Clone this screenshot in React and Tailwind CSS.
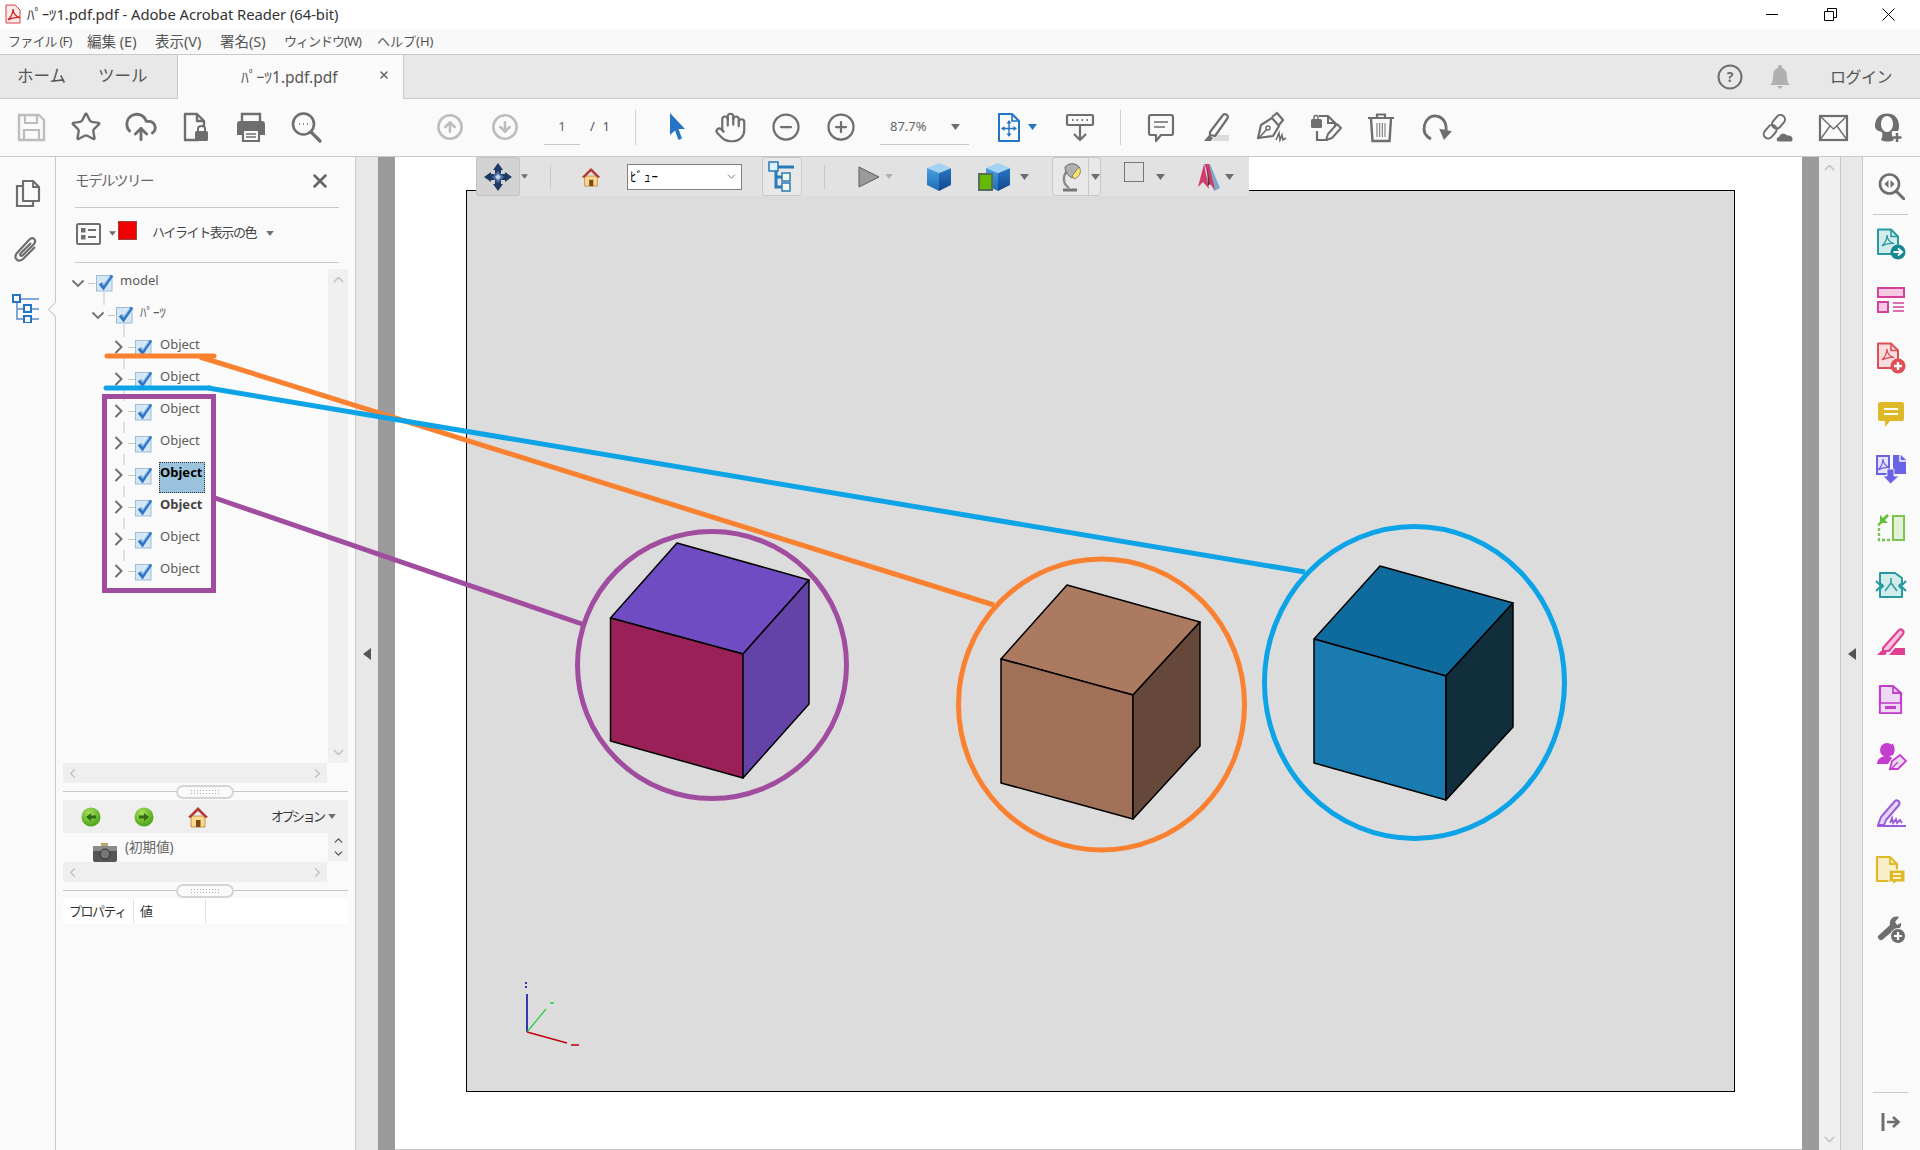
import React from "react";
import { CloudUpload, CircleArrowUp, CircleArrowDown, CircleMinus, CirclePlus, Hand, Star, ChevronUp, ChevronDown, ChevronLeft, ChevronRight, X } from "lucide-react";

const GRAY = "#6e6e6e";
const KANA = "ﾊﾟｰﾂ";

const Svg = ({ w = 32, h = 32, vb, children, className = "" }) => (
  <svg width={w} height={h} viewBox={vb || `0 0 ${w} ${h}`} fill="none" className={className}>
    {children}
  </svg>
);

const Swoosh = ({ x = 0, y = 0, c, s = 1.3 }) => (
  <path
    transform={`translate(${x} ${y})`}
    d="M1 12 C4 9 6 4 6 1 C6 5 9 9 13 9.5 C9 9 4 10 1 12Z"
    stroke={c}
    strokeWidth={s}
    fill="none"
  />
);

const Caret = ({ c = "#6e6e6e", w = 9, h = 6 }) => (
  <svg width={w} height={h} viewBox="0 0 9 6" className="shrink-0">
    <path d="M0 0H9L4.5 6Z" fill={c} />
  </svg>
);

/* top toolbar icons */
const SaveIcon = () => (
  <Svg>
    <path d="M4 4H24L29 9V29H4Z" stroke="#bdbdbd" strokeWidth="2.4" strokeLinejoin="round" />
    <path d="M10 4V12H22V4M9 29V19H24V29" stroke="#bdbdbd" strokeWidth="2.2" />
  </Svg>
);
const FileLockIcon = () => (
  <Svg>
    <path d="M18 29H5V3H17L24 10V15M17 3V10H24" stroke={GRAY} strokeWidth="2.4" strokeLinejoin="round" />
    <rect x="15" y="20" width="13" height="10" rx="1.5" fill={GRAY} />
    <path d="M18 20V17.5C18 14 25 14 25 17.5V20" stroke={GRAY} strokeWidth="2" />
  </Svg>
);
const PrintIcon = () => (
  <Svg>
    <path d="M7 11V3H25V11" stroke={GRAY} strokeWidth="2.4" />
    <path d="M5 10H27C29 10 30 11 30 13V24H25V18H7V24H2V13C2 11 3 10 5 10Z" fill={GRAY} />
    <path d="M8 19H24V30H8Z" stroke={GRAY} strokeWidth="2.2" fill="#fafafa" />
    <path d="M11 23H21M11 26H21" stroke={GRAY} strokeWidth="1.4" />
  </Svg>
);
const SearchDotsIcon = () => (
  <Svg>
    <circle cx="13.5" cy="13" r="10.5" stroke={GRAY} strokeWidth="2.6" />
    <path d="M21 21L30 30" stroke={GRAY} strokeWidth="3.2" strokeLinecap="round" />
    <path d="M9 13H9.8M13 13H13.8M17 13H17.8" stroke={GRAY} strokeWidth="2.2" />
  </Svg>
);
const CursorIcon = () => (
  <Svg>
    <path d="M10 2V24L15 19.5L18.5 29L22 27.5L18.5 18H25Z" fill="#2274c4" />
  </Svg>
);
const FitPageIcon = () => (
  <Svg>
    <path d="M6 3H19L26 10V30H6Z" stroke="#2274c4" strokeWidth="2" strokeLinejoin="round" fill="#fafafa" />
    <path d="M19 3V10H26" stroke="#2274c4" strokeWidth="1.6" />
    <path d="M16 11V24M10 17.5H22" stroke="#2274c4" strokeWidth="1.4" />
    <path d="M16 9L13.5 12.5H18.5ZM16 26L13.5 22.5H18.5ZM8 17.5L11.5 15V20ZM24 17.5L20.5 15V20Z" fill="#2274c4" />
  </Svg>
);
const KeyboardDownIcon = () => (
  <Svg>
    <rect x="3" y="4" width="26" height="10" rx="1" stroke={GRAY} strokeWidth="2.2" />
    <path d="M8 9H9.5M12.5 9H14M17.5 9H19M22.5 9H24" stroke={GRAY} strokeWidth="2" />
    <path d="M16 14V29M10 23L16 29L22 23" stroke={GRAY} strokeWidth="2.2" />
  </Svg>
);
const CommentIcon = () => (
  <Svg>
    <path d="M6 4H26C27.5 4 28 5 28 6V22C28 23 27.5 24 26 24H16L11 30V24H6C4.5 24 4 23 4 22V6C4 5 4.5 4 6 4Z" stroke={GRAY} strokeWidth="2.2" strokeLinejoin="round" />
    <path d="M9 11H23M9 16H20" stroke={GRAY} strokeWidth="1.6" />
  </Svg>
);
const HighlightIcon = () => (
  <Svg>
    <rect x="13" y="24" width="16" height="6" fill="#dcdcdc" />
    <path d="M10 21L23 4C25 2 28 4 28 6L27 8L15 25L10 24Z" stroke={GRAY} strokeWidth="2.2" strokeLinejoin="round" />
    <path d="M4 30L9 24L13 27L11 30Z" fill={GRAY} />
  </Svg>
);
const PenSignIcon = () => (
  <Svg>
    <path d="M3 27L6 14L17 7L24 15L18 25Z" stroke={GRAY} strokeWidth="2.2" strokeLinejoin="round" />
    <path d="M17 6L22 2L28 9L24 14" stroke={GRAY} strokeWidth="2.2" />
    <path d="M3 28L12 18" stroke={GRAY} strokeWidth="1.6" />
    <circle cx="13" cy="17" r="2" stroke={GRAY} strokeWidth="1.5" />
    <path d="M21 29L24 22L25 29L27 24L28 29L31 27" stroke={GRAY} strokeWidth="1.6" />
  </Svg>
);
const EditDocIcon = () => (
  <Svg>
    <path d="M9 5H18L25 12V15M7 20V29H18" stroke={GRAY} strokeWidth="2.2" />
    <path d="M18 5V12H25" stroke={GRAY} strokeWidth="2" />
    <rect x="1" y="8" width="11" height="9" rx="1.5" fill={GRAY} />
    <path d="M4 8V6C4 4 8 4 8 6V8" stroke={GRAY} strokeWidth="1.5" />
    <path d="M16 29L18 23L27 13L31 17L22 27Z" stroke={GRAY} strokeWidth="2" strokeLinejoin="round" />
  </Svg>
);
const TrashIcon = () => (
  <Svg>
    <path d="M3 7H29M12 7V3.5H20V7" stroke={GRAY} strokeWidth="2.2" />
    <path d="M6 8L7.5 30H24.5L26 8" stroke={GRAY} strokeWidth="2.4" />
    <path d="M12 12V26M14.7 12V26M17.3 12V26M20 12V26" stroke={GRAY} strokeWidth="1" />
  </Svg>
);
const RotateIcon = () => (
  <Svg>
    <path d="M11 28C5 25 3 20 4.5 14C6 8 11 4 16.5 5C23 6 27 12 26 20" stroke={GRAY} strokeWidth="2.8" />
    <path d="M18 19H31L25 29Z" fill={GRAY} transform="rotate(12 25 24)" />
  </Svg>
);
const LinkCloudIcon = () => (
  <Svg>
    <g transform="rotate(-50 13 15)" stroke={GRAY} strokeWidth="2">
      <rect x="-2" y="10.5" width="15" height="9" rx="4.5" />
      <rect x="11" y="10.5" width="15" height="9" rx="4.5" />
    </g>
    <path d="M17 31C13.5 31 13.5 26 17 25.5C17.5 22 23 21 25 24C29 23.5 31 26 31 28C31 30 30 31 29 31Z" fill={GRAY} stroke="#fafafa" />
  </Svg>
);
const MailIcon = () => (
  <Svg>
    <rect x="3" y="5" width="27" height="24" stroke={GRAY} strokeWidth="2.2" fill="none" />
    <path d="M3 5L16.5 18L30 5M3 29L13 15M30 29L20 15" stroke={GRAY} strokeWidth="1.4" />
  </Svg>
);
const PersonPlusIcon = () => (
  <Svg>
    <path d="M3 15C3 7 8 2.5 15 2.5C22 2.5 27 7 27 15C27 17 26.5 19 26 20H20C19 24 21 27 22 29C18 31 13 31 9 29C10 27 11 24 10 21C5 20 3 18 3 15Z" fill={GRAY} />
    <ellipse cx="15" cy="13" rx="6" ry="8" fill="#fafafa" />
    <path d="M25 22V31M20.5 26.5H29.5" stroke={GRAY} strokeWidth="2.4" />
  </Svg>
);

/* right rail icons */
const DocPlus = ({ line, fill, circle, plus }) => (
  <Svg>
    <path d="M3 1.5H16L23 8.5V26H3Z" fill={fill} stroke={line} strokeWidth="2" strokeLinejoin="round" />
    <path d="M16 1.5V8.5H23" stroke={line} strokeWidth="1.6" />
    <Swoosh x={6} y={6} c={line} />
    <circle cx="23" cy="24" r="7.5" fill={circle} />
    {plus ? (
      <path d="M19 24H27M23 20V28" stroke="#fff" strokeWidth="2.4" />
    ) : (
      <path d="M18.5 24H26M23 20.5L27 24L23 27.5" stroke="#fff" strokeWidth="2" />
    )}
  </Svg>
);
const RailIcons = [
  <DocPlus line="#279aa0" fill="#d2ecec" circle="#15898f" />,
  <Svg>
    <rect x="3" y="3" width="26" height="9" fill="#f7c9e2" stroke="#d4409a" strokeWidth="2" />
    <rect x="3" y="17" width="10" height="10" fill="#f7c9e2" stroke="#d4409a" strokeWidth="2" />
    <path d="M18 18H29M18 22H29M18 26H29" stroke="#d4409a" strokeWidth="1.5" />
  </Svg>,
  <DocPlus line="#de4e54" fill="#f9dcdd" circle="#de4e54" plus />,
  <Svg>
    <path d="M5 3H27C28 3 29 4 29 5V20C29 21 28 22 27 22H15L10 28V22H5C4 22 3 21 3 20V5C3 4 4 3 5 3Z" fill="#e0b929" />
    <path d="M9 10H23M9 15H23" stroke="#fff" strokeWidth="2" />
  </Svg>,
  <Svg className="-mt-[4px]">
    <path d="M2 2H14V20H2Z" fill="#e4e3fb" stroke="#6a63e6" strokeWidth="2" />
    <path d="M18 1H26L31 6V20H18Z" fill="#6a63e6" />
    <path d="M25 1V7H31" stroke="#fafafa" strokeWidth="1.4" />
    <Swoosh x={2} y={4} c="#6a63e6" />
    <path d="M12 15H19V22H24L15.5 30L8 22H12Z" fill="#6a63e6" stroke="#fafafa" strokeWidth="0.8" />
  </Svg>,
  <Svg>
    <rect x="18" y="3" width="11" height="24" fill="#e2f1d8" stroke="#7cc450" strokeWidth="2" />
    <path d="M4 10V27H15M4 10H8" stroke="#7cc450" strokeWidth="2.4" strokeDasharray="3 2" />
    <path d="M5 2V10H13L10 7L14 3L12 1L8 5Z" fill="#63bd3b" />
  </Svg>,
  <Svg>
    <path d="M8 3H20L27 8V13L24 16L27 19V27H5V19L8 16L5 13V3Z" fill="#d2ecec" stroke="#279aa0" strokeWidth="2" strokeLinejoin="round" />
    <path d="M1 11L6 16L1 21M31 11L26 16L31 21" stroke="#279aa0" strokeWidth="2" />
    <path d="M16 8V13L10 21M16 13L22 21" stroke="#279aa0" strokeWidth="1.5" />
  </Svg>,
  <Svg>
    <path d="M8 21L24 3C26 1 30 4 28 7L14 24H8Z" fill="#f7c3dd" stroke="#e03f93" strokeWidth="2" strokeLinejoin="round" />
    <path d="M2 28L8 22L12 26L10 28ZM14 28L20 21H30V28Z" fill="#e03f93" />
  </Svg>,
  <Svg>
    <path d="M5 2H18L26 9V29H5Z" fill="#f0d9f5" stroke="#c23fce" strokeWidth="2.2" strokeLinejoin="round" />
    <path d="M18 2V9H26" stroke="#c23fce" strokeWidth="1.8" />
    <rect x="5" y="19" width="21" height="10" fill="#f0d9f5" stroke="#c23fce" strokeWidth="1.6" />
    <rect x="10" y="22" width="11" height="3" fill="#c23fce" />
  </Svg>,
  <Svg>
    <circle cx="12" cy="9" r="7" fill="#c23fce" />
    <path d="M2 23C2 18 6 15 12 15C14 15 16 16 17 17L13 23Z" fill="#c23fce" />
    <path d="M17 3C20 6 19 12 17 14" stroke="#c23fce" strokeWidth="1.6" />
    <path d="M15 28L17 20L25 14L31 20L23 28Z" fill="#f0d9f5" stroke="#c23fce" strokeWidth="1.8" />
    <path d="M15 29L23 21" stroke="#c23fce" strokeWidth="1.3" />
  </Svg>,
  <Svg>
    <path d="M3 27L6 19L20 3C22 1 26 4 24 7L11 22L9 27Z" fill="#e4d6f7" stroke="#9b5ddb" strokeWidth="2" strokeLinejoin="round" />
    <path d="M2 28H31M15 25L17 20L18 25L21 21L22 25L25 22L27 25" stroke="#9b5ddb" strokeWidth="1.8" />
  </Svg>,
  <Svg>
    <path d="M2 2H15L22 9V26H2Z" fill="#f7efc8" stroke="#e0b929" strokeWidth="2.2" strokeLinejoin="round" />
    <path d="M15 2V9H22" stroke="#e0b929" strokeWidth="1.8" />
    <path d="M15 15H29C30 15 30 16 30 16V26C30 27 29 27 29 27H21L18 30V27H15C14 27 14 26 14 26V16C14 16 14 15 15 15Z" fill="#e0b929" stroke="#fafafa" />
    <path d="M18 19H26M18 23H26" stroke="#fff" strokeWidth="1.6" />
  </Svg>,
  <Svg>
    <path d="M3 24L15 13C14 8 18 3 24 5L20 10L22 13L26 11C27 15 23 19 19 18L7 28C5 29 2 26 3 24Z" fill={GRAY} />
    <circle cx="23" cy="24" r="7.5" fill={GRAY} stroke="#fafafa" />
    <path d="M19 24H27M23 20V28" stroke="#fff" strokeWidth="2.2" />
  </Svg>,
];

/* tree */
const TreeRow = ({ depth = 0, label, bold, selected, parent, sibling }) => (
  <div className="flex items-start h-[32px]" style={{ paddingLeft: depth }}>
    <svg width="50" height="32" viewBox="0 0 50 32" fill="none" className="shrink-0 overflow-visible">
      {parent ? (
        <path d="M9.5 16.5L15 22L20.5 16.5" stroke="#707070" strokeWidth="1.9" />
      ) : (
        <path d="M12.5 13L18.5 19L12.5 25" stroke="#707070" strokeWidth="2" />
      )}
      <path d="M25 19.5H32" stroke="#c4c4c4" />
      {parent && <path d="M41 28V41" stroke="#c4c4c4" />}
      {sibling && <path d="M21 30V41" stroke="#c4c4c4" />}
      <g transform={parent ? "translate(1 0)" : "translate(0 1)"}>
        <rect x="32.5" y="11.5" width="15.5" height="15.5" fill="#d5e6f5" stroke="#9dbcd8" />
        <path d="M36 19.5L39.5 24L48 11.5" stroke="#3377c2" strokeWidth="3" />
        <path d="M37.5 18L40 20.5L46 12.5" stroke="#8cbcea" strokeWidth="1.2" />
      </g>
    </svg>
    {selected ? (
      <span className="ml-[6px] mt-[6px] block w-[46px] h-[31px] bg-[#9cc3de] border border-dotted border-[#333] text-[13px] font-bold leading-[19px] text-black">
        {label}
      </span>
    ) : (
      <span className={`ml-[7px] text-[13px] leading-[32px] ${bold ? "font-bold text-[#444]" : "text-[#5a5a5a]"}`}>{label}</span>
    )}
  </div>
);

const HScroll = () => (
  <div className="ml-[7px] w-[264px] h-[20px] bg-[#efefef] flex items-center justify-between px-[2px] shrink-0">
    <ChevronLeft size={15} color="#c0c0c0" strokeWidth={2} />
    <ChevronRight size={15} color="#c0c0c0" strokeWidth={2} />
  </div>
);

const Splitter = () => (
  <div className="relative ml-[7px] w-[285px] h-[17px] flex items-center shrink-0">
    <div className="absolute inset-x-0 top-[8px] h-px bg-[#c8c8c8]" />
    <div className="relative ml-[113px] w-[58px] h-[14px] rounded-full border-2 border-[#d5d5d5] bg-[#fafafa] flex items-center justify-center">
      <div className="w-[30px] h-[5px] bg-[radial-gradient(#aaa_1px,transparent_1px)] bg-[length:3px_3px]" />
    </div>
  </div>
);

const GreenBall = ({ left }) => (
  <svg width="20" height="20" viewBox="0 0 20 20">
    <defs>
      <radialGradient id={left ? "gl" : "gr"} cx="0.4" cy="0.3" r="0.8">
        <stop offset="0" stopColor="#a8e05a" />
        <stop offset="1" stopColor="#3e9a10" />
      </radialGradient>
    </defs>
    <circle cx="10" cy="10" r="9.5" fill={`url(#${left ? "gl" : "gr"})`} />
    <path d={left ? "M5 10L10 6V8.5H15V11.5H10V14Z" : "M15 10L10 6V8.5H5V11.5H10V14Z"} fill="#2f6b10" />
  </svg>
);

const House = ({ s = 22 }) => (
  <svg width={s} height={s} viewBox="0 0 22 22">
    <path d="M4 10V21H18V10Z" fill="#fbd98c" stroke="#b9803a" strokeWidth="0.8" />
    <path d="M1 11L11 1L21 11L18.5 12L11 5L3.5 12Z" fill="#b13a36" />
    <rect x="9" y="14" width="4.5" height="7" fill="#7a4a1e" />
  </svg>
);

const Cube = () => (
  <svg width="28" height="30" viewBox="0 0 28 30">
    <defs>
      <linearGradient id="cubeFront" x1="0" y1="0" x2="0" y2="1">
        <stop offset="0" stopColor="#4aa0e0" />
        <stop offset="1" stopColor="#1d6cb8" />
      </linearGradient>
      <linearGradient id="cubeSide" x1="0" y1="0" x2="0" y2="1">
        <stop offset="0" stopColor="#2a78c4" />
        <stop offset="1" stopColor="#10468c" />
      </linearGradient>
    </defs>
    <path d="M14 11L26 6V23L14 29Z" fill="url(#cubeSide)" />
    <path d="M14 1L26 6L14 11L2 6Z" fill="#a4d2f2" />
    <path d="M14 11V29L2 23V6Z" fill="url(#cubeFront)" />
  </svg>
);

const Toolbar3D = () => (
  <div className="absolute left-[81px] top-0 w-[773px] h-[39px] bg-[#e2e2e2] flex items-center">
    <div className="w-[44px] h-[39px] bg-[#d3d3d3] border border-[#c4c4c4] rounded-[2px] flex items-center justify-center shrink-0">
      <svg width="32" height="32" viewBox="0 0 32 32">
        <path d="M16 2L21 9H19V13H23V11L30 16L23 21V19H19V23H21L16 30L11 23H13V19H9V21L2 16L9 11V13H13V9H11Z" fill="#1f3a63" />
        <path d="M16 10L22 16L16 22L10 16Z" fill="#4a6c9f" />
        <path d="M16 13L19 16L16 19L13 16Z" fill="#c2d2e8" />
      </svg>
    </div>
    <div className="ml-[1px] w-[5px]"><Caret w={7} h={5} /></div>
    <div className="ml-[24px] w-px h-[24px] bg-[#c8c8c8]" />
    <div className="ml-[30px] w-[20px] flex justify-center"><House /></div>
    <div className="ml-[26px] w-[115px] h-[26px] bg-white border border-[#808080] flex items-center justify-between px-[2px] shrink-0">
      <span className="text-[13px] text-black leading-none tracking-[1px]">ﾋﾞｭｰ</span>
      <ChevronDown size={13} color="#555" strokeWidth={1.5} className="mr-[1px]" />
    </div>
    <div className="ml-[20px] w-[40px] h-[39px] bg-[#e8e8e8] border border-[#c9c9c9] rounded-[3px] flex items-center justify-center shrink-0">
      <svg width="28" height="32" viewBox="0 0 28 32" fill="none">
        <path d="M4 6H26M8 8V26H16M8 16H16" stroke="#2a7ab8" strokeWidth="3" />
        <rect x="1" y="1" width="9" height="9" fill="#dff0fb" stroke="#2a7ab8" strokeWidth="1.5" />
        <rect x="14" y="12" width="8" height="8" fill="#f4f8e8" stroke="#2a7ab8" strokeWidth="1.5" />
        <rect x="14" y="22" width="8" height="8" fill="#f4f8e8" stroke="#2a7ab8" strokeWidth="1.5" />
      </svg>
    </div>
    <div className="ml-[22px] w-px h-[24px] bg-[#c8c8c8]" />
    <div className="ml-[33px] w-[22px] flex justify-center">
      <svg width="22" height="22" viewBox="0 0 22 22"><path d="M1 1L21 11L1 21Z" fill="#9a9a9a" stroke="#5c5c5c" strokeWidth="1" /></svg>
    </div>
    <div className="ml-[5px] w-[10px]"><Caret c="#b0b0b0" w={8} h={5} /></div>
    <div className="ml-[30px] w-[28px]"><Cube /></div>
    <div className="ml-[31px] w-[28px] relative">
      <Cube />
      <div className="absolute -left-[6px] bottom-[1px] w-[15px] h-[18px] bg-[#67b800] border-2 border-[#55705a]" />
    </div>
    <div className="ml-[8px] w-[10px]"><Caret /></div>
    <div className="ml-[22px] w-[49px] h-[39px] bg-[#e8e8e8] border border-[#c9c9c9] rounded-[3px] flex items-center shrink-0">
      <div className="w-[37px] flex justify-center">
        <svg width="26" height="32" viewBox="0 0 26 32" fill="none">
          <path d="M5 29H19" stroke="#777" strokeWidth="3" />
          <path d="M11 27C4 22 5 15 9 10L14 4" stroke="#8a8a8a" strokeWidth="2.4" />
          <path d="M7 6C12 1 18 2 22 7L14 17C9 14 7 10 7 6Z" fill="#b0b0b0" stroke="#666" />
          <path d="M21 6C24 10 22 16 16 18L14 15L20 7Z" fill="#f5e06a" stroke="#666" strokeWidth="0.7" />
        </svg>
      </div>
      <div className="h-full border-l border-[#c9c9c9] pl-[2px] flex items-center"><Caret /></div>
    </div>
    <div className="ml-[23px] w-[20px] h-[20px] -mt-[9px] border border-[#777] bg-[#e2e2e2]" />
    <div className="ml-[12px] w-[10px]"><Caret /></div>
    <div className="ml-[30px] w-[26px]">
      <svg width="26" height="30" viewBox="0 0 26 30">
        <path d="M2 25L8 2L13 27L7 20Z" fill="#d13a6a" />
        <path d="M8 2H14L24 26L18 29Z" fill="#7ea8c8" />
        <path d="M9 2H13L19 28L14 22Z" fill="#d13a6a" />
        <path d="M11 5L14 22L12 24Z" fill="#5c2a3c" />
      </svg>
    </div>
    <div className="ml-[3px] w-[10px]"><Caret /></div>
  </div>
);

/* everything drawn on top of the page: the 3D cubes and the hand-drawn annotations */
const Box = ({ p, top, front, right, sw = 1.5 }) => {
  const [tb, rt, ft, lt, lb, fb, rb] = p;
  const pts = (...a) => a.map((q) => q.join(",")).join(" ");
  return (
    <g stroke="#000" strokeWidth={sw} strokeLinejoin="round">
      <polygon points={pts(tb, rt, ft, lt)} fill={top} />
      <polygon points={pts(lt, ft, fb, lb)} fill={front} />
      <polygon points={pts(ft, rt, rb, fb)} fill={right} />
    </g>
  );
};

const Overlay = () => (
  <svg width="1920" height="1150" viewBox="0 0 1920 1150" fill="none" className="absolute left-0 top-0 pointer-events-none">
    <Box
      p={[[677, 543], [809, 580], [743, 654], [610.5, 618], [610.5, 741], [743, 778], [809, 704]]}
      top="#704cc2"
      front="#9a2058"
      right="#6443a8"
    />
    <Box
      p={[[1067, 585], [1200, 622], [1133, 695], [1001, 659], [1001, 783], [1133, 819], [1200, 746]]}
      top="#ac7a60"
      front="#a07058"
      right="#65483a"
    />
    <Box
      p={[[1380, 566], [1513, 603], [1446, 676], [1314, 639], [1314, 763], [1446, 800], [1513, 727]]}
      top="#0f6b9e"
      front="#1a7bb0"
      right="#112e3c"
    />

    {/* axes */}
    <path d="M527 1032V994" stroke="#00009c" strokeWidth="1.5" />
    <path d="M526 982V990" stroke="#00009c" strokeWidth="1.5" strokeDasharray="2 2" />
    <path d="M527 1032L546 1009" stroke="#22d040" strokeWidth="1.2" />
    <path d="M550 1003H554" stroke="#22d040" strokeWidth="1.5" />
    <path d="M527 1032L567 1043" stroke="#c00010" strokeWidth="1.3" />
    <path d="M571 1045H579" stroke="#c00010" strokeWidth="1.5" />

    {/* annotations */}
    <ellipse cx="712" cy="665" rx="134.5" ry="133.5" stroke="#a04da0" strokeWidth="5" />
    <ellipse cx="1101.5" cy="704.5" rx="143" ry="145.5" stroke="#f98130" strokeWidth="5" />
    <ellipse cx="1414.5" cy="682.5" rx="150" ry="156" stroke="#0ca3e7" strokeWidth="5" />
    <path d="M107 356H214" stroke="#f98130" strokeWidth="5" strokeLinecap="round" />
    <path d="M200 357L994 605" stroke="#f98130" strokeWidth="5" />
    <path d="M106 388H210" stroke="#0ca3e7" strokeWidth="5" strokeLinecap="round" />
    <path d="M208 388L1305 572" stroke="#0ca3e7" strokeWidth="5" />
    <rect x="104.5" y="396.5" width="109" height="194" stroke="#a04da0" strokeWidth="5" />
    <path d="M215 498L582 624" stroke="#a04da0" strokeWidth="5" />
  </svg>
);

const Btn = ({ children, w = "w-[55px]" }) => <div className={`${w} flex items-center justify-center shrink-0`}>{children}</div>;

export default function App() {
  return (
    <div className="relative w-[1920px] h-[1150px] overflow-hidden bg-white flex flex-col font-['Noto_Sans','Noto_Sans_CJK_JP',sans-serif] text-[#555]">
      {/* title bar */}
      <div className="h-[29px] flex items-center shrink-0 bg-white">
        <svg width="16" height="20" viewBox="0 0 16 20" className="ml-[5px] -mt-[2px]">
          <path d="M1 1H10L15 6V19H1Z" fill="#fdeaea" stroke="#d24040" />
          <Swoosh x={2} y={4} c="#d02020" />
        </svg>
        <span className="ml-[6px] text-[14.8px] text-[#333] tracking-[-0.05px]">
          {KANA}1.pdf.pdf - Adobe Acrobat Reader (64-bit)
        </span>
        <div className="ml-auto flex items-center pr-[3px]">
          <div className="w-[58px] flex justify-center"><div className="w-[12px] h-px bg-black" /></div>
          <div className="w-[58px] flex justify-center">
            <svg width="13" height="13" viewBox="0 0 13 13" fill="none">
              <path d="M0.5 3.5H9.5V12.5H0.5ZM3.5 3.5V0.5H12.5V9.5H9.5" stroke="#000" />
            </svg>
          </div>
          <div className="w-[58px] flex justify-center">
            <svg width="13" height="13" viewBox="0 0 13 13" fill="none"><path d="M0.5 0.5L12.5 12.5M12.5 0.5L0.5 12.5" stroke="#000" /></svg>
          </div>
        </div>
      </div>

      {/* menu */}
      <div className="h-[26px] bg-[#f9f9f9] border-b border-[#c8c8c8] flex items-center text-[13px] text-[#555] pl-[8px] shrink-0 whitespace-nowrap">
        <span className="w-[79px] tracking-[-0.8px]">ファイル (F)</span>
        <span className="w-[68px] text-[14.5px]">編集 (E)</span>
        <span className="w-[65px] text-[14.5px]">表示(V)</span>
        <span className="w-[64px] text-[14.5px]">署名(S)</span>
        <span className="w-[93px] tracking-[-1px]">ウィンドウ(W)</span>
        <span>ヘルプ(H)</span>
      </div>

      {/* tabs */}
      <div className="h-[44px] bg-[#e8e8e8] border-b border-[#c8c8c8] flex shrink-0">
        <div className="w-[178px] border-r border-[#c8c8c8] flex items-center pl-[17px] text-[16.5px] text-[#555]">
          <span className="w-[81px]">ホーム</span>
          <span>ツール</span>
        </div>
        <div className="relative w-[226px] h-[44px] bg-[#fafafa] border-r border-[#c8c8c8] flex items-center pl-[63px] text-[15.5px] text-[#555]">
          <span className="mt-[1px]">{KANA}1.pdf.pdf</span>
          <X size={12} strokeWidth={3} color="#666" className="absolute right-[13px] top-[14px]" />
        </div>
        <div className="ml-auto flex items-center">
          <svg width="26" height="26" viewBox="0 0 26 26" fill="none" className="mr-[26px]">
            <circle cx="13" cy="13" r="11.5" stroke={GRAY} strokeWidth="2" />
            <text x="13" y="18" textAnchor="middle" fontSize="14" fontWeight="700" fill={GRAY}>?</text>
          </svg>
          <svg width="22" height="26" viewBox="0 0 22 26" className="mr-[39px]">
            <path d="M11 1C13 1 13 3 13 4C17 5 18 9 18 13C18 17 19 19 21 21H1C3 19 4 17 4 13C4 9 5 5 9 4C9 3 9 1 11 1Z" fill="#b0b0b0" />
            <path d="M8 22H14L11 25Z" fill="#b0b0b0" />
          </svg>
          <span className="w-[90px] text-[16px] text-[#555] tracking-[-0.5px]">ログイン</span>
        </div>
      </div>

      {/* main toolbar */}
      <div className="h-[58px] bg-[#fafafa] border-b border-[#c8c8c8] flex items-center pl-[3px] pr-[5px] pb-[1px] shrink-0">
        <Btn><SaveIcon /></Btn>
        <Btn><Star size={32} color={GRAY} strokeWidth={1.8} /></Btn>
        <Btn><CloudUpload size={34} color={GRAY} strokeWidth={2} /></Btn>
        <Btn><FileLockIcon /></Btn>
        <Btn><PrintIcon /></Btn>
        <Btn><SearchDotsIcon /></Btn>

        <div className="ml-[89px] flex">
          <Btn><CircleArrowUp size={28} color="#bdbdbd" strokeWidth={2.2} /></Btn>
          <Btn><CircleArrowDown size={28} color="#bdbdbd" strokeWidth={2.2} /></Btn>
        </div>
        <div className="ml-[12px] w-[36px] h-[34px] mt-[1px] border-b border-[#c8c8c8] text-center text-[13px] leading-[30px] text-[#666]">1</div>
        <div className="ml-[10px] w-[20px] text-[13px] flex justify-between"><span>/</span><span>1</span></div>
        <div className="ml-[25px] w-px h-[35px] bg-[#d0d0d0]" />

        <div className="ml-[12px] flex">
          <Btn><CursorIcon /></Btn>
          <Btn><Hand size={33} color={GRAY} strokeWidth={1.6} /></Btn>
          <Btn><CircleMinus size={30} color={GRAY} strokeWidth={1.8} /></Btn>
          <Btn><CirclePlus size={30} color={GRAY} strokeWidth={1.8} /></Btn>
        </div>
        <div className="ml-[12px] w-[89px] h-[34px] mt-[1px] border-b border-[#c8c8c8] flex items-center pl-[10px] text-[13px] text-[#666]">
          87.7%
          <span className="ml-[24px]"><Caret /></span>
        </div>
        <div className="ml-[24px] w-[59px] flex items-center">
          <FitPageIcon />
          <span className="ml-[3px]"><Caret c="#2274c4" /></span>
        </div>
        <Btn><KeyboardDownIcon /></Btn>
        <div className="ml-[13px] w-px h-[35px] bg-[#d0d0d0]" />
        <div className="ml-[12px] flex">
          <Btn><CommentIcon /></Btn>
          <Btn><HighlightIcon /></Btn>
          <Btn><PenSignIcon /></Btn>
          <Btn><EditDocIcon /></Btn>
          <Btn><TrashIcon /></Btn>
          <Btn><RotateIcon /></Btn>
        </div>
        <div className="ml-auto flex">
          <Btn><LinkCloudIcon /></Btn>
          <Btn><MailIcon /></Btn>
          <Btn><PersonPlusIcon /></Btn>
        </div>
      </div>

      {/* body */}
      <div className="flex-1 flex min-h-0">
        {/* left rail */}
        <div className="relative w-[56px] bg-[#fafafa] border-r border-[#c8c8c8] flex flex-col items-center pt-[22px] shrink-0">
          <svg width="28" height="28" viewBox="0 0 28 28" fill="none">
            <path d="M9 2H19L25 8V22H9Z" stroke={GRAY} strokeWidth="2.2" strokeLinejoin="round" />
            <path d="M19 2V8H25" stroke={GRAY} strokeWidth="1.8" />
            <path d="M9 7H3V27H19V22" stroke={GRAY} strokeWidth="2.2" />
          </svg>
          <svg width="28" height="30" viewBox="0 0 28 30" fill="none" className="mt-[27px] -ml-[3px]">
            <path d="M23 13L11 25C6 29 1 24 5 19L17 6C21 2 25 6 22 10L11 21C9 23 7 21 9 19L19 9" stroke={GRAY} strokeWidth="2.2" />
          </svg>
          <svg width="30" height="30" viewBox="0 0 30 30" fill="none" className="mt-[29px] -ml-[3px]">
            <path d="M9 6H28M6 9V26H12M6 16H12M21 16H28M21 26H28" stroke="#7fa8d6" strokeWidth="2" />
            <rect x="2" y="2" width="7" height="7" stroke="#2274c4" strokeWidth="2" />
            <rect x="13" y="12" width="7" height="7" stroke="#2274c4" strokeWidth="2" />
            <rect x="13" y="23" width="7" height="7" stroke="#2274c4" strokeWidth="2" />
          </svg>
          <div className="absolute -right-[6px] top-[147px] w-[11px] h-[11px] rotate-45 bg-[#fafafa] border-l border-b border-[#c8c8c8]" />
        </div>

        {/* model tree panel */}
        <div className="w-[300px] bg-[#fafafa] border-r border-[#c8c8c8] flex flex-col shrink-0">
          <div className="ml-[19px] mr-[16px] h-[51px] border-b border-[#c8c8c8] flex items-center justify-between shrink-0">
            <span className="text-[14.5px] text-[#666] -mt-[2px] tracking-[-1.5px]">モデルツリー</span>
            <X size={22} strokeWidth={2.8} color="#666" className="mr-[8px] -mt-[3px]" />
          </div>
          <div className="ml-[19px] mr-[16px] h-[55px] border-b border-[#c8c8c8] flex items-center pb-[4px] shrink-0">
            <svg width="25" height="22" viewBox="0 0 25 22" fill="none" className="ml-[1px] mt-[1px]">
              <rect x="1" y="1" width="23" height="20" rx="1.5" stroke={GRAY} strokeWidth="2" />
              <rect x="5" y="5" width="4.5" height="4.5" fill={GRAY} />
              <rect x="5" y="12" width="4.5" height="4.5" fill={GRAY} />
              <path d="M12 7H20M12 14H20" stroke={GRAY} strokeWidth="2" />
            </svg>
            <span className="ml-[8px]"><Caret w={7} h={5} /></span>
            <div className="ml-[2px] -mt-[6px] w-[19px] h-[19px] bg-[#f00000] border border-[#a04040]" />
            <span className="ml-[15px] text-[13px] text-[#444] tracking-[-1.4px]">ハイライト表示の色</span>
            <span className="ml-[10px]"><Caret w={8} h={5} /></span>
          </div>

          <div className="flex h-[500px] ml-[7px] w-[285px] shrink-0">
            <div className="flex-1 pt-[1px]">
              <TreeRow parent label="model" />
              <TreeRow parent depth={20} label={KANA} />
              <TreeRow depth={40} label="Object" sibling />
              <TreeRow depth={40} label="Object" sibling />
              <TreeRow depth={40} label="Object" sibling />
              <TreeRow depth={40} label="Object" sibling />
              <TreeRow depth={40} label="Object" selected sibling />
              <TreeRow depth={40} label="Object" bold sibling />
              <TreeRow depth={40} label="Object" sibling />
              <TreeRow depth={40} label="Object" />
            </div>
            <div className="mt-[6px] w-[20px] bg-[#f0f0f0] flex flex-col justify-between items-center py-[2px]">
              <ChevronUp size={17} color="#c4c4c4" strokeWidth={2} />
              <ChevronDown size={17} color="#c4c4c4" strokeWidth={2} />
            </div>
          </div>

          <HScroll />
          <Splitter />
          <div className="ml-[7px] w-[285px] h-[33px] bg-[#efefef] flex items-center shrink-0">
            <span className="ml-[18px]"><GreenBall left /></span>
            <span className="ml-[33px]"><GreenBall /></span>
            <span className="ml-[33px]"><House /></span>
            <span className="ml-[62px] w-[51px] text-[13px] text-[#333] tracking-[-2.5px] whitespace-nowrap">オプション</span>
            <span className="ml-[6px]"><Caret w={8} h={5} /></span>
          </div>
          <div className="ml-[7px] w-[285px] h-[29px] flex shrink-0">
            <svg width="24" height="20" viewBox="0 0 24 20" className="ml-[30px] mt-[9px]">
              <path d="M8 4V1H15V4Z" fill="#b8a870" />
              <rect x="0" y="4" width="24" height="16" rx="2" fill="#555" />
              <rect x="0" y="4" width="24" height="5" rx="1" fill="#8a8a8a" />
              <circle cx="12" cy="12" r="5" fill="#777" stroke="#333" />
            </svg>
            <span className="ml-[8px] text-[13.5px] leading-[28px] text-[#666]">(初期値)</span>
            <div className="ml-auto w-[20px] h-[28px] bg-[#f0f0f0] flex flex-col items-center justify-center">
              <ChevronUp size={13} color="#555" strokeWidth={2.5} />
              <ChevronDown size={13} color="#555" strokeWidth={2.5} />
            </div>
          </div>
          <HScroll />
          <Splitter />
          <div className="ml-[7px] w-[285px] h-[25px] bg-white flex items-center text-[13px] text-[#333] shrink-0">
            <span className="pl-[6px] w-[71px] h-full leading-[25px] border-r border-[#e4e4e4] tracking-[-1.5px]">プロパティ</span>
            <span className="pl-[6px] w-[72px] h-full leading-[25px] border-r border-[#e4e4e4]">値</span>
          </div>
        </div>

        {/* collapse strip */}
        <div className="w-[22px] bg-[#e8e8e8] flex items-center justify-center shrink-0">
          <svg width="8" height="12" viewBox="0 0 8 12"><path d="M8 0V12L0 6Z" fill="#555" /></svg>
        </div>

        {/* document */}
        <div className="flex-1 flex min-w-0">
          <div className="w-[17px] bg-[#9b9b9b] shrink-0" />
          <div className="relative flex-1 bg-white border-b border-[#c8c8c8]">
            <div className="mt-[33px] ml-[71px] w-[1269px] h-[902px] bg-[#dcdcdc] border border-black" />
            <Toolbar3D />
          </div>
          <div className="w-[17px] bg-[#9b9b9b] shrink-0" />
        </div>
        <div className="w-[22px] bg-[#f0f0f0] border-r border-[#c8c8c8] flex flex-col justify-between items-center py-[2px] shrink-0">
          <ChevronUp size={17} color="#c4c4c4" strokeWidth={2} />
          <ChevronDown size={17} color="#c4c4c4" strokeWidth={2} />
        </div>
        <div className="w-[22px] bg-[#e8e8e8] border-r border-[#c8c8c8] flex items-center justify-center shrink-0">
          <svg width="8" height="12" viewBox="0 0 8 12"><path d="M8 0V12L0 6Z" fill="#555" /></svg>
        </div>

        {/* right rail */}
        <div className="w-[57px] bg-[#fafafa] flex flex-col items-center pr-[2px] shrink-0">
          <div className="w-[35px] h-[58px] border-b border-[#c8c8c8] flex items-center justify-center shrink-0">
            <svg width="28" height="28" viewBox="0 0 28 28" fill="none">
              <circle cx="12.5" cy="12" r="9.5" stroke={GRAY} strokeWidth="2.6" />
              <path d="M19 19L27 27" stroke={GRAY} strokeWidth="3" strokeLinecap="round" />
              <path d="M11.5 8V16L7.5 12ZM13.5 8V16L17.5 12Z" fill={GRAY} />
            </svg>
          </div>
          {RailIcons.map((icon, i) => (
            <div key={i} className="h-[57px] flex items-center justify-center shrink-0">{icon}</div>
          ))}
          <div className="mt-auto w-[35px] h-[58px] border-t border-[#c8c8c8] flex items-center justify-center shrink-0">
            <svg width="22" height="22" viewBox="0 0 22 22" fill="none">
              <path d="M3 2V20" stroke={GRAY} strokeWidth="3" />
              <path d="M7 11H18M13 6L18.5 11L13 16" stroke={GRAY} strokeWidth="2.6" />
            </svg>
          </div>
        </div>
      </div>

      <Overlay />
    </div>
  );
}
